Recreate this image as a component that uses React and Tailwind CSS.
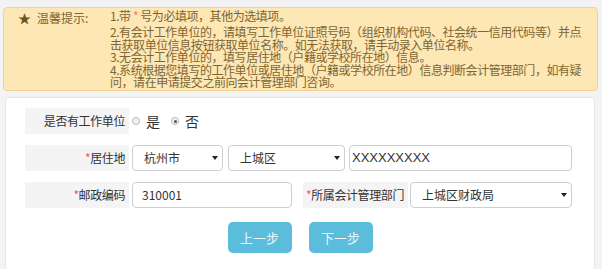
import React from "react";

const font = { fontFamily: '"Noto Sans CJK SC", "Liberation Sans", sans-serif' };

const labelClass = "h-[26px] w-[104px] bg-[#f4f4f4] flex items-center justify-end pr-[4px] text-[12px] tracking-[-0.4px] text-[#333] shrink-0 whitespace-nowrap";
const boxClass = "h-[26px] border border-[#cfcfcf] rounded-[4px] bg-white flex items-center text-[12px] text-[#333] shrink-0";

const Arrow = () => (
  <svg width="6" height="4" viewBox="0 0 6 4" className="ml-auto mr-[4px]">
    <polygon points="0,0 6,0 3,4" fill="#222" />
  </svg>
);

const Req = () => <span className="text-[#e85c5c]">*</span>;

const Select = ({ value, width, pad = "pl-[11px]" }) => (
  <div className={boxClass + " " + pad} style={{ width }}>
    <span>{value}</span>
    <Arrow />
  </div>
);

const Radio = ({ checked, label }) => (
  <div className="flex items-center">
    <span className="w-[8px] h-[8px] rounded-full border border-[#b8b8b8] bg-[#f2f2f2] flex items-center justify-center">
      {checked && <span className="w-[3px] h-[3px] rounded-full bg-[#555]"></span>}
    </span>
    <span className="ml-[6px] text-[14px] text-[#333] leading-none">{label}</span>
  </div>
);

export default function App() {
  return (
    <div className="w-[602px] h-[269px] bg-[#f3f3f3] overflow-hidden pt-[7px] pl-[3px]" style={font}>
      {/* notice */}
      <div className="w-[595px] h-[84px] bg-[#fde7b5] border border-[#f4d294] rounded-[4px] flex text-[#7d6531] text-[12px]">
        <div className="w-[106px] shrink-0 pl-[14px] pt-[2px] leading-[15px] whitespace-nowrap">
          <span className="text-[13px] text-[#6b5422]">★</span>
          <span className="ml-[6px]">温馨提示:</span>
        </div>
        <div className="pt-[1px] whitespace-nowrap tracking-[-0.45px]">
          <div className="leading-[13px] mb-[4px]">1.带 <span className="text-[#f07b6b]">*</span> 号为必填项，其他为选填项。</div>
          <div className="leading-[12.6px]">
            <div>2.有会计工作单位的，请填写工作单位证照号码（组织机构代码、社会统一信用代码等）并点</div>
            <div>击获取单位信息按钮获取单位名称。如无法获取，请手动录入单位名称。</div>
            <div>3.无会计工作单位的，填写居住地（户籍或学校所在地）信息。</div>
            <div>4.系统根据您填写的工作单位或居住地（户籍或学校所在地）信息判断会计管理部门，如有疑</div>
            <div>问，请在申请提交之前向会计管理部门咨询。</div>
          </div>
        </div>
      </div>

      {/* form panel */}
      <div className="mt-[6px] ml-[2px] w-[590px] h-[200px] bg-white border border-[#e6e6e6] rounded-[3px] pt-[10px] pl-[19px]">
        <div className="flex items-center">
          <div className={labelClass}>是否有工作单位</div>
          <div className="flex items-center ml-[3px] gap-[11px]">
            <Radio label="是" />
            <Radio checked label="否" />
          </div>
        </div>

        <div className="flex items-center mt-[11px]">
          <div className={labelClass}><Req />居住地</div>
          <div className="ml-[3px]"><Select value="杭州市" width={91} /></div>
          <div className="ml-[5px]"><Select value="上城区" width={117} /></div>
          <div className={boxClass + " ml-[4px] w-[223px] pl-[2px] text-[13px]"} style={{ fontFamily: '"Liberation Sans", sans-serif' }}>XXXXXXXXX</div>
        </div>

        <div className="flex items-center mt-[11px]">
          <div className={labelClass}><Req />邮政编码</div>
          <div className={boxClass + " ml-[3px] w-[160px] pl-[9px]"}>310001</div>
          <div className={labelClass + " ml-[11px] w-[105px] pr-[2px]"}><Req />所属会计管理部门</div>
          <div className="ml-[2px]"><Select value="上城区财政局" width={162} /></div>
        </div>

        <div className="flex justify-center gap-[17px] mt-[14px] pr-[19px]">
          <button className="w-[64px] h-[31px] rounded-[5px] bg-[#5bbcdb] text-[#e8f6fb] text-[13px]">上一步</button>
          <button className="w-[64px] h-[31px] rounded-[5px] bg-[#5bbcdb] text-[#e8f6fb] text-[13px]">下一步</button>
        </div>
      </div>
    </div>
  );
}
